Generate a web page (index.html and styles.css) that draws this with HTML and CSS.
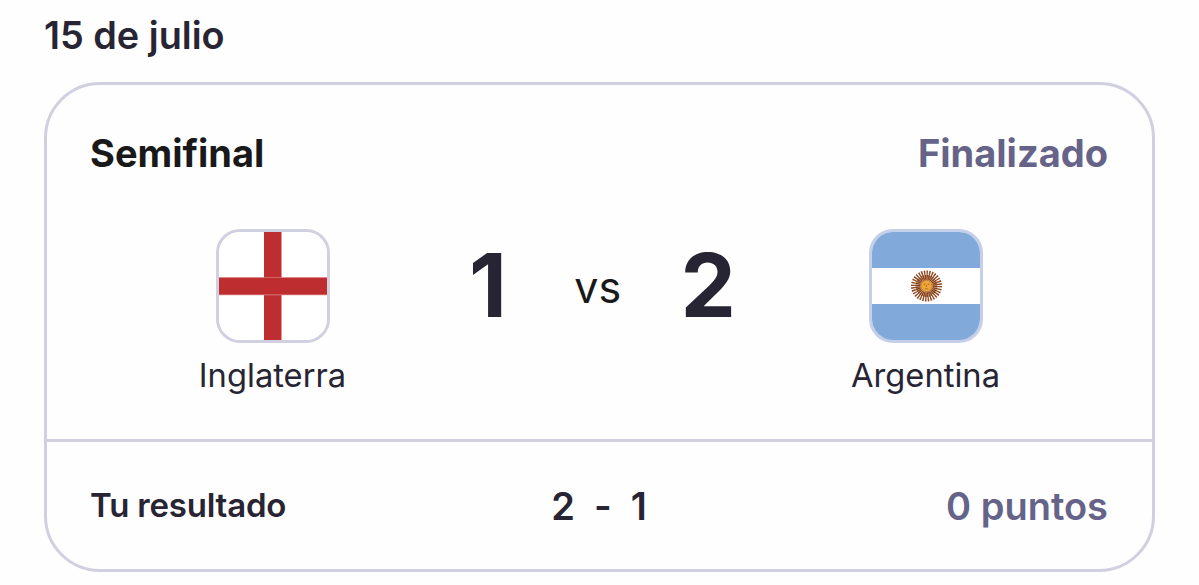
FILE: index.html
```
<!DOCTYPE html>
<html lang="es">
    <head>
        <meta charset="UTF-8">
        <title>Resultados</title>
        <link rel="stylesheet" href="styles.css">
    </head>
    <body>
        <h2 class="match-date">15 de julio</h2>
        <div class="match-card">
            <div class="match-body">
                <div class="match-header">
                    <span class="stage">Semifinal</span>
                    <span class="status">Finalizado</span>
                </div>
                <div class="match-teams">
                    <div class="team">
                        <div class="flag">
                            <svg viewBox="0 0 108 108" preserveAspectRatio="none">
                                <rect width="108" height="108" fill="#fff"/>
                                <path d="M45 0h17.500v108h-17.500z" fill="#be2d2f"/>
                                <path d="M0 45.200h108v18h-108z" fill="#e08e90"/>
                                <path d="M0 45.800h108v16.800h-108z" fill="#be2d2f"/>
                            </svg>
                        </div>
                        <span class="team-name">Inglaterra</span>
                    </div>
                    <div class="score">
                        <span class="goals home">1</span>
                        <span class="vs">vs</span>
                        <span class="goals away">2</span>
                    </div>
                    <div class="team">
                        <div class="flag flag-blue">
                            <svg viewBox="0 0 108 108" preserveAspectRatio="none">
                                <rect width="108" height="108" fill="#81a9d9"/>
                                <rect y="36" width="108" height="36" fill="#fff"/>
                                <!-- sol de mayo -->
                                <circle cx="54.500" cy="54" r="11" fill="none" stroke="#8f4a22" stroke-width="9" pathLength="320" stroke-dasharray="5.500 4.500"/>
                                <circle cx="54.500" cy="54" r="8.500" fill="none" stroke="#8a4218" stroke-width="5" pathLength="320" stroke-dasharray="7.500 2.500"/>
                                <circle cx="54.500" cy="54" r="5.800" fill="#eda536" stroke="#a8601c" stroke-width="0.800"/>
                                <path d="M51.500 52.300h2M55.500 52.300h2M54.500 53v2M52.700 56.800h3.600" fill="none" stroke="#9a5f20" stroke-width="0.700"/>
                            </svg>
                        </div>
                        <span class="team-name">Argentina</span>
                    </div>
                </div>
            </div>
            <div class="match-footer">
                <span class="footer-label">Tu resultado</span>
                <span class="prediction"><span>2</span><span>-</span><span>1</span></span>
                <span class="points">0 puntos</span>
            </div>
        </div>
    </body>
</html>
```

FILE: styles.css
```
* {
    box-sizing: border-box;
}
body {
    font-family: Inter, "Liberation Sans", sans-serif;
    font-optical-sizing: none;
    margin: 0;
    padding: 0 44px;
    background: #fefefe;
    color: #272533;
}
.match-date {
    margin: 0 0 11px;
    font-size: 37.8px;
    font-weight: 600;
    line-height: 71px;
}
.match-card {
    height: 490px;
    border: 3px solid #d0d0e0;
    border-radius: 56px;
    background: #fefefe;
}
.match-body {
    height: 357px;
    padding: 44px 44px 0 43px;
    border-bottom: 3px solid #d0d0e0;
}
.match-header {
    display: flex;
    justify-content: space-between;
    font-size: 38px;
    font-weight: 700;
    line-height: 48px;
}
.stage {
    color: #191919;
}
.status, .points {
    color: #656388;
}
.match-teams {
    display: grid;
    grid-template-columns: 365px 1fr 365px;
    margin-top: 52px;
}
.team {
    display: flex;
    flex-direction: column;
    align-items: center;
    gap: 9px;
}
.flag {
    width: 114px;
    height: 114px;
    border: 3px solid #d0d0e0;
    border-radius: 24px;
    overflow: hidden;
}
.flag-blue {
    border-color: #c6cfe8;
}
.flag svg {
    display: block;
    width: 108px;
    height: 108px;
}
.team-name {
    font-size: 32.7px;
    line-height: 46px;
}
.score {
    display: flex;
    justify-content: space-between;
    align-items: center;
    height: 112px;
    padding: 0 7px 0 14px;
}
.goals {
    font-size: 88px;
    font-weight: 700;
}
.vs {
    margin: 4px 0 0 8px;
    color: #191919;
    font-size: 43px;
}
.match-footer {
    display: grid;
    grid-template-columns: 1fr auto 1fr;
    align-items: center;
    height: 127px;
    padding: 0 44px 0 43px;
    font-size: 38px;
    font-weight: 600;
}
.footer-label {
    padding-bottom: 2px;
    font-size: 33px;
    letter-spacing: -0.2px;
}
.prediction {
    display: flex;
    gap: 19px;
}
.points {
    text-align: right;
}
```
